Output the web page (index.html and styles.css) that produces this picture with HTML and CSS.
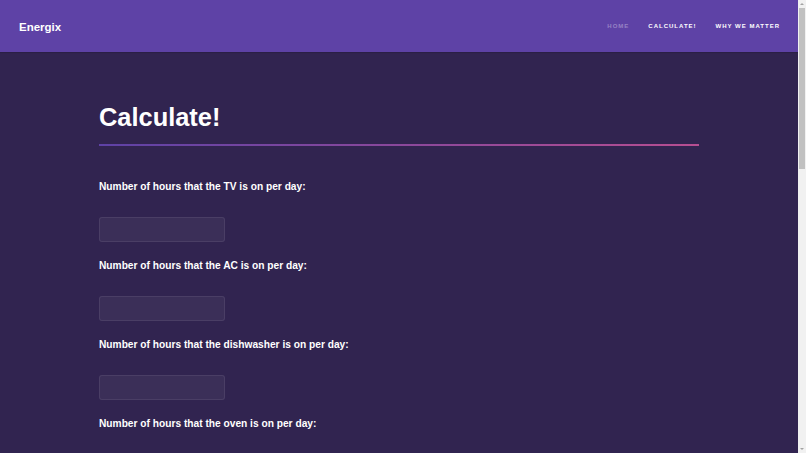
FILE: index.html
```html
<!DOCTYPE html>
<html lang="en">
<head>
<meta charset="utf-8">
<title>Energix</title>
<link rel="stylesheet" href="styles.css">
</head>
<body>
<header class="topbar">
  <div class="brand">Energix</div>
  <nav class="nav">
    <a class="nav-link dim" href="#">Home</a>
    <a class="nav-link" href="#">Calculate!</a>
    <a class="nav-link" href="#">Why We Matter</a>
  </nav>
</header>
<main class="wrapper">
  <section class="inner">
    <h1 class="title">Calculate!</h1>
    <form class="calc">
      <div class="field">
        <label class="label">Number of hours that the TV is on per day:</label>
        <input class="input" type="text">
      </div>
      <div class="field">
        <label class="label">Number of hours that the AC is on per day:</label>
        <input class="input" type="text">
      </div>
      <div class="field">
        <label class="label">Number of hours that the dishwasher is on per day:</label>
        <input class="input" type="text">
      </div>
      <div class="field">
        <label class="label">Number of hours that the oven is on per day:</label>
        <input class="input" type="text">
      </div>
      <div class="field">
        <label class="label">Number of hours that the computer is on per day:</label>
        <input class="input" type="text">
      </div>
    </form>
  </section>
</main>
<div class="scrollbar" aria-hidden="true">
  <svg class="arrow" viewBox="0 0 8 8" width="8" height="8"><path d="M2 5 L4 3 L6 5 Z" fill="#a3a3a3"/></svg>
  <div class="thumb"></div>
  <div class="track-rest"></div>
  <svg class="arrow" viewBox="0 0 8 8" width="8" height="8"><path d="M2 3 L4 5 L6 3 Z" fill="#a3a3a3"/></svg>
</div>
</body>
</html>
```

FILE: styles.css
```css
html, body {
  margin: 0;
  padding: 0;
}
body {
  background: #312450;
  color: #ffffff;
  font-family: "Liberation Sans", Arial, sans-serif;
  padding-right: 8px;
}
.topbar {
  height: 52px;
  background: #5e42a6;
  display: flex;
  align-items: center;
  justify-content: space-between;
  padding: 0 18px 0 19px;
  box-shadow: 0 1px 1px rgba(0, 0, 0, 0.12);
}
.brand {
  font-size: 11.5px;
  font-weight: bold;
  color: #ffffff;
  margin-top: 1px;
}
.nav {
  display: flex;
  gap: 19px;
}
.nav-link {
  font-size: 6px;
  font-weight: bold;
  letter-spacing: 1px;
  text-transform: uppercase;
  text-decoration: none;
  color: #ffffff;
}
.nav-link.dim {
  color: rgba(255, 255, 255, 0.35);
}
.inner {
  width: 600px;
  margin: 0 auto;
  padding-top: 49px;
  padding-bottom: 80px;
}
.title {
  font-size: 25.4px;
  font-weight: bold;
  line-height: 32px;
  margin: 0;
  padding-bottom: 11px;
  border-bottom: 2px solid transparent;
  border-image: linear-gradient(to right, #5e42a6, #b74e91) 1;
}
.calc {
  padding-top: 33px;
}
.field {
  margin-bottom: 16px;
}
.label {
  display: block;
  font-size: 10.2px;
  font-weight: bold;
  line-height: 16px;
  color: #ffffff;
}
.input {
  display: block;
  box-sizing: border-box;
  margin-top: 22px;
  width: 126px;
  height: 25px;
  background: rgba(255, 255, 255, 0.05);
  border: 1px solid rgba(255, 255, 255, 0.08);
  border-radius: 3px;
  color: #ffffff;
  outline: none;
}
.scrollbar {
  position: fixed;
  top: 0;
  right: 0;
  bottom: 0;
  width: 8px;
  background: #f1f1f1;
  display: flex;
  flex-direction: column;
}
.arrow {
  display: block;
  flex: none;
}
.thumb {
  flex: none;
  height: 161px;
  margin: 0 1px;
  background: #c1c1c1;
}
.track-rest {
  flex: 1;
}
```
